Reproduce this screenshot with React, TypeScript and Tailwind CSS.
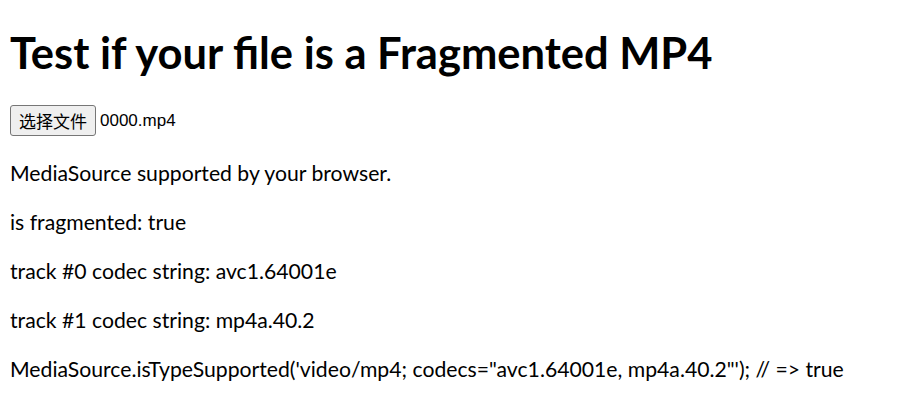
export default function App() {
  const lines = [
    'MediaSource supported by your browser.',
    'is fragmented: true',
    'track #0 codec string: avc1.64001e',
    'track #1 codec string: mp4a.40.2',
    `MediaSource.isTypeSupported('video/mp4; codecs="avc1.64001e, mp4a.40.2"'); // => true`,
  ];

  return (
    <div className="min-h-[407px] bg-white px-[10px] text-black font-['Lato',sans-serif]">
      <h1 className="pt-[26px] text-[43.5px] leading-[52px] font-bold">
        Test if your file is a Fragmented MP4
      </h1>

      {/* fake file input */}
      <div className="mt-[27px] flex items-center h-[31px]">
        <button className="h-[31px] px-[8px] rounded-[3px] border border-[#767676] bg-[#efefef] text-[17px] font-['Noto_Sans_CJK_SC',sans-serif]">
          选择文件
        </button>
        <span className="ml-[4px] text-[17px] font-['Liberation_Sans',sans-serif]">0000.mp4</span>
      </div>

      <div className="mt-[23px] flex flex-col gap-[20px] text-[21.2px] leading-[29px]">
        {lines.map((l) => (
          <p key={l}>{l}</p>
        ))}
      </div>
    </div>
  );
}
